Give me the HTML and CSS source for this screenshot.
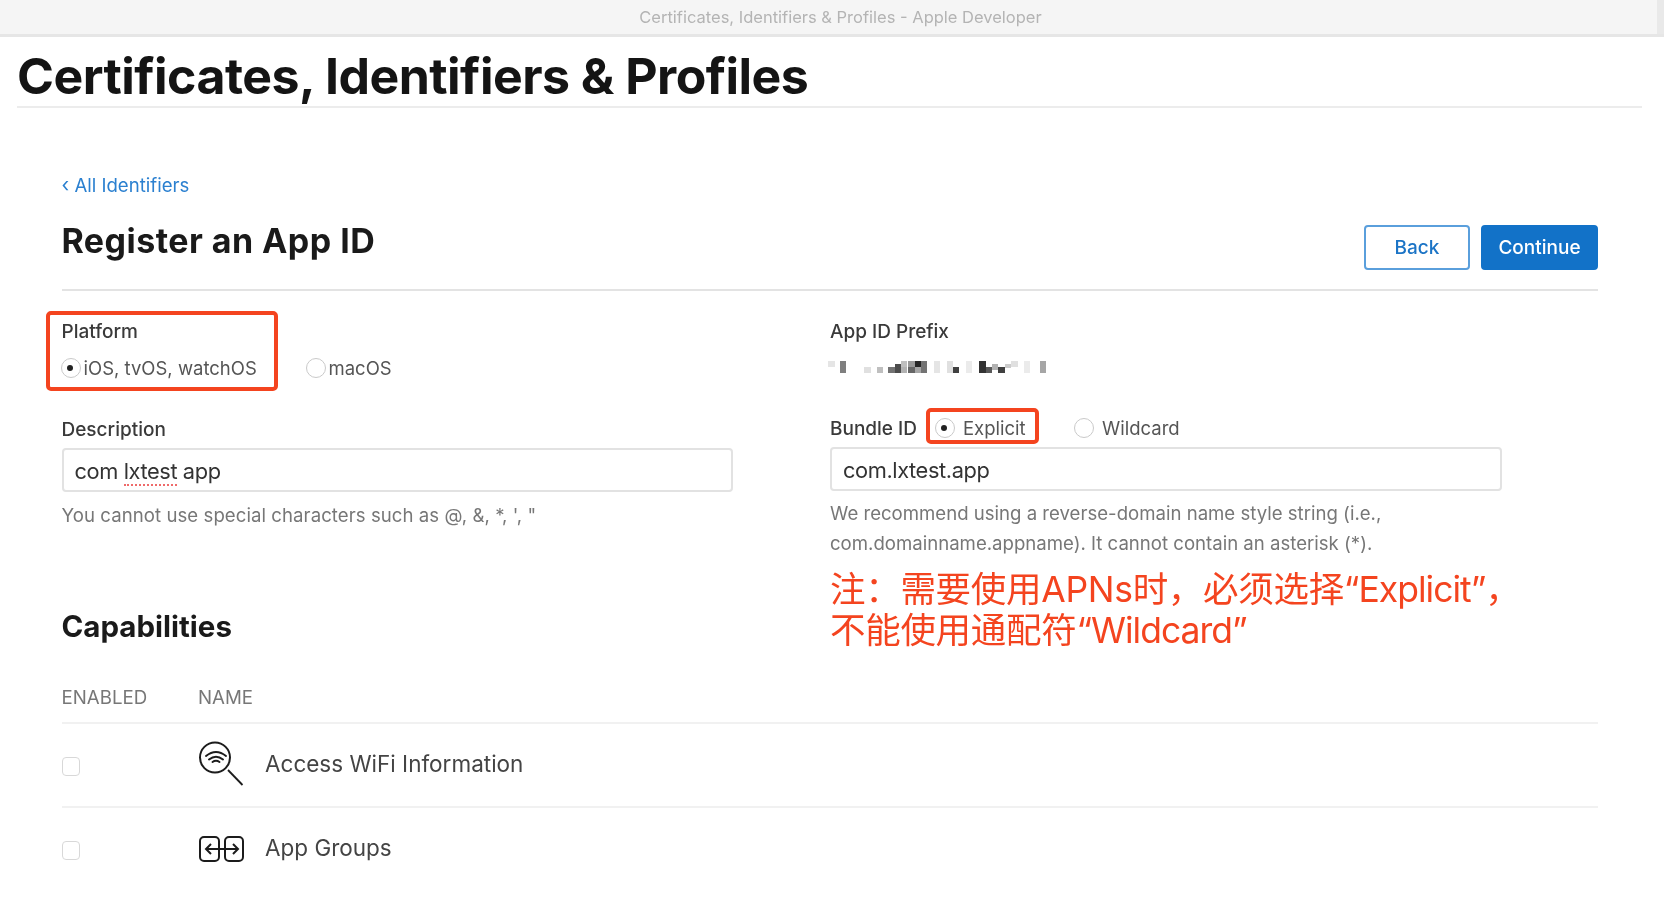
FILE: index.html
```html
<!DOCTYPE html>
<html lang="zh-CN">
<head>
<meta charset="utf-8">
<title>Certificates, Identifiers &amp; Profiles - Apple Developer</title>
<link rel="stylesheet" href="styles.css">
</head>
<body>
<div class="page">
  <header class="titlebar">Certificates, Identifiers &amp; Profiles - Apple Developer</header>
  <div class="brand"><h1 class="brand-title">Certificates, Identifiers &amp; Profiles</h1></div>
  <main class="content">
    <a class="back-link" href="#"><span class="chev">‹</span> All Identifiers</a>
    <div class="head-row">
      <h2 class="page-title">Register an App ID</h2>
      <div class="actions">
        <button class="btn btn-outline">Back</button>
        <button class="btn btn-solid">Continue</button>
      </div>
    </div>
    <div class="form-grid">
      <section class="col col-left">
        <div class="platform">
          <span class="annot annot-platform"></span>
          <div class="label">Platform</div>
          <div class="platform-options">
            <label class="opt opt-ios"><span class="radio on"></span>iOS, tvOS, watchOS</label>
            <label class="opt"><span class="radio"></span>macOS</label>
          </div>
        </div>
        <div class="label label-desc">Description</div>
        <div class="input input-desc">com <span class="squiggle">lxtest</span> app</div>
        <p class="hint hint-desc">You cannot use special characters such as @, &amp;, *, ', "</p>
        <h3 class="section-title">Capabilities</h3>
      </section>
      <section class="col col-right">
        <div class="label">App ID Prefix</div>
        <svg class="mosaic" width="219" height="14" viewBox="0 0 219 14" aria-hidden="true">
          <g fill="#000">
            <rect x="0" y="1" width="7" height="6" fill-opacity=".1"/>
            <rect x="12" y="1" width="6" height="12" fill-opacity=".5"/>
            <rect x="36" y="7" width="7" height="6" fill-opacity=".12"/>
            <rect x="49" y="7" width="6" height="6" fill-opacity=".25"/>
            <rect x="60" y="7" width="7" height="6" fill-opacity=".55"/>
            <rect x="67" y="4" width="6" height="9" fill-opacity=".7"/>
            <rect x="73" y="1" width="6" height="6" fill-opacity=".25"/>
            <rect x="73" y="7" width="6" height="6" fill-opacity=".3"/>
            <rect x="80" y="1" width="7" height="6" fill-opacity=".4"/>
            <rect x="80" y="7" width="7" height="6" fill-opacity=".6"/>
            <rect x="87" y="1" width="6" height="6" fill-opacity=".85"/>
            <rect x="87" y="7" width="6" height="6" fill-opacity=".35"/>
            <rect x="93" y="1" width="6" height="12" fill-opacity=".55"/>
            <rect x="106" y="1" width="6" height="12" fill-opacity=".1"/>
            <rect x="119" y="1" width="6" height="12" fill-opacity=".12"/>
            <rect x="125" y="7" width="6" height="6" fill-opacity=".75"/>
            <rect x="138" y="1" width="6" height="12" fill-opacity=".08"/>
            <rect x="151" y="1" width="7" height="12" fill-opacity=".8"/>
            <rect x="158" y="7" width="6" height="6" fill-opacity=".65"/>
            <rect x="164" y="4" width="6" height="6" fill-opacity=".3"/>
            <rect x="170" y="7" width="7" height="6" fill-opacity=".75"/>
            <rect x="177" y="4" width="6" height="4" fill-opacity=".2"/>
            <rect x="183" y="1" width="7" height="6" fill-opacity=".12"/>
            <rect x="196" y="1" width="6" height="12" fill-opacity=".08"/>
            <rect x="212" y="1" width="6" height="12" fill-opacity=".35"/>
          </g>
        </svg>
        <div class="bundle-row">
          <div class="label">Bundle ID</div>
          <label class="opt opt-explicit"><span class="radio on"></span>Explicit<span class="annot annot-explicit"></span></label>
          <label class="opt opt-wild"><span class="radio"></span>Wildcard</label>
        </div>
        <div class="input input-bundle">com.lxtest.app</div>
        <p class="hint hint-bundle">We recommend using a reverse-domain name style string (i.e.,<br>com.domainname.appname). It cannot contain an asterisk (*).</p>
        <p class="note">注：需要使用APNs时，必须选择<span class="note-latin">“Explicit”</span>，<br>不能使用通配符<span class="note-latin">“Wildcard”</span></p>
      </section>
    </div>
    <div class="table">
      <div class="t-head"><span class="t-col1">ENABLED</span><span>NAME</span></div>
      <div class="t-row">
        <span class="t-col1"><span class="check"></span></span>
        <svg class="icon icon-wifi" width="46" height="46" viewBox="0 0 46 46" fill="none" stroke="#1c1c1c" stroke-width="2" aria-hidden="true">
          <circle cx="17" cy="16.5" r="15"/>
          <path d="M30 29L44.5 44" stroke-width="1.8"/>
          <path d="M8 15Q18 7 28 15" stroke-linecap="round"/>
          <path d="M11 18.5Q18 13 25 18.5" stroke-linecap="round"/>
          <path d="M14.5 21Q18 18.5 21.5 21" stroke-linecap="round"/>
        </svg>
        <span class="t-name">Access WiFi Information</span>
      </div>
      <div class="t-row t-row-2">
        <span class="t-col1"><span class="check"></span></span>
        <svg class="icon icon-groups" width="46" height="28" viewBox="0 0 46 28" fill="none" stroke="#1c1c1c" stroke-width="2" aria-hidden="true">
          <rect x="2" y="2" width="19" height="24" rx="4"/>
          <rect x="27" y="2" width="18" height="24" rx="4"/>
          <path d="M8 14H40M13 9L8 14L13 19M35 9L40 14L35 19"/>
        </svg>
        <span class="t-name">App Groups</span>
      </div>
    </div>
  </main>
</div>
</body>
</html>
```
FILE: styles.css
```css
* { box-sizing: border-box; }
html, body { margin: 0; padding: 0; background: #fff; }
body { height: 902px; overflow: hidden; font-family: Inter, "Noto Sans CJK SC", sans-serif; color: #3a3a3a; }
.page { filter: blur(0.5px); }

.titlebar {
  height: 37px;
  padding: 1px 0 0 17px;
  line-height: 33px;
  font-size: 16.5px;
  text-align: center;
  color: #b4b4b4;
  background: linear-gradient(to right, #f5f5f5 1657px, #e9e9e9 1657px);
  border-bottom: 3px solid #e6e6e6;
}

.brand { margin: 0 22px 0 17px; border-bottom: 2px solid #ececec; height: 71px; padding-top: 4px; }
.brand-title { margin: 0; font-size: 50px; line-height: 70px; font-weight: 700; color: #141414; letter-spacing: -0.53px; }

.content { padding: 0 66px 0 61.5px; }
.back-link { display: block; margin-top: 65px; height: 24px; line-height: 24px; font-size: 18.6px; color: #2b80d0; text-decoration: none; }
.chev { font-size: 20px; }

.head-row { display: flex; justify-content: space-between; align-items: flex-start; margin-top: 16px; height: 78px; border-bottom: 2px solid #e3e3e3; }
.page-title { margin: 8px 0 0; font-size: 34px; line-height: 40px; font-weight: 700; color: #1a1a1a; letter-spacing: 0.45px; }
.actions { display: flex; gap: 11px; margin-top: 12px; }
.btn { height: 45px; border-radius: 4px; font: 500 19px/1 Inter, sans-serif; border: 2px solid #1272c8; }
.btn-outline { width: 106px; background: #fff; color: #1b74c6; border-color: #5a9fdc; }
.btn-solid { width: 117px; background: #1272c8; color: #fff; }

.form-grid { display: grid; grid-template-columns: 768.5px 672px; }
.col { padding-top: 29px; }
.label { height: 24px; line-height: 24px; font-size: 19px; font-weight: 500; color: #3a3a3a; }

.platform { position: relative; height: 63px; }
.platform-options { display: flex; margin-top: 12px; }
.opt { display: flex; align-items: center; height: 24px; line-height: 24px; font-size: 18.5px; color: #555; position: relative; }
.radio { flex: none; width: 20px; height: 20px; border-radius: 50%; border: 1.5px solid #c9c9c9; background: #fff; margin-right: 3px; position: relative; }
.radio.on::after { content: ""; position: absolute; left: 5.5px; top: 5.5px; width: 6px; height: 6px; border-radius: 50%; background: #222; }
.opt-ios { width: 245px; margin-left: -1px; }

.annot { position: absolute; display: block; border: 4px solid #f4441f; border-radius: 5px; pointer-events: none; }
.annot-platform { left: -16px; top: -9px; width: 232px; height: 80px; }
.annot-explicit { top: -8px; width: 113px; height: 36px; }

.label-desc { margin-top: 35px; }
.input { height: 44px; background: #fff; border: 2px solid #e2e2e2; border-radius: 4px; padding: 1px 11px 0; line-height: 40px; font-size: 21.8px; color: #333; letter-spacing: -0.4px; }
.input-desc { margin-top: 6px; width: 671px; }
.squiggle { border-bottom: 2px dotted #ef6a6a; display: inline-block; line-height: 25px; }
.hint { margin: 0; color: #777; font-size: 18.6px; }
.hint-desc { margin-top: 11px; line-height: 24px; letter-spacing: 0.06px; }
.section-title { margin: 79px 0 0; font-size: 29.5px; line-height: 40px; font-weight: 700; color: #1a1a1a; letter-spacing: 0; }

.mosaic { display: block; margin: 16px 0 0 -2px; }
.bundle-row { display: flex; margin-top: 42px; height: 24px; }
.bundle-row .label { margin-top: 1px; }
.opt-explicit { margin-left: 18px; width: 139px; }
.opt-explicit .radio { margin-right: 8px; }
.opt-explicit .annot { left: -9px; }
.opt-wild .radio { margin-right: 8px; }
.input-bundle { margin-top: 7px; width: 672px; }
.hint-bundle { margin-top: 7px; line-height: 30px; }
.note { margin: 11px 0 0; font-size: 35.5px; line-height: 41px; color: #f4441f; white-space: nowrap; letter-spacing: -0.3px; }
.note-latin { letter-spacing: -1px; }

.table { margin-top: 28px; }
.t-head { display: flex; height: 45px; padding-top: 7px; line-height: 24px; font-size: 18.7px; color: #777; border-bottom: 2px solid #f1f1f1; }
.t-col1 { width: 136.5px; flex: none; }
.t-row { display: flex; align-items: center; height: 84px; border-bottom: 2px solid #f1f1f1; position: relative; }
.t-row-2 { border-bottom: 0; height: 82px; }
.check { display: block; width: 18px; height: 19px; margin-top: 3px; border: 1.5px solid #d8d8d8; border-radius: 4px; background: #fff; }
.icon { flex: none; display: block; }
.icon-wifi { margin-top: -2px; }
.t-name { font-size: 22.5px; color: #444; margin: -3px 0 0 21px; }
```
